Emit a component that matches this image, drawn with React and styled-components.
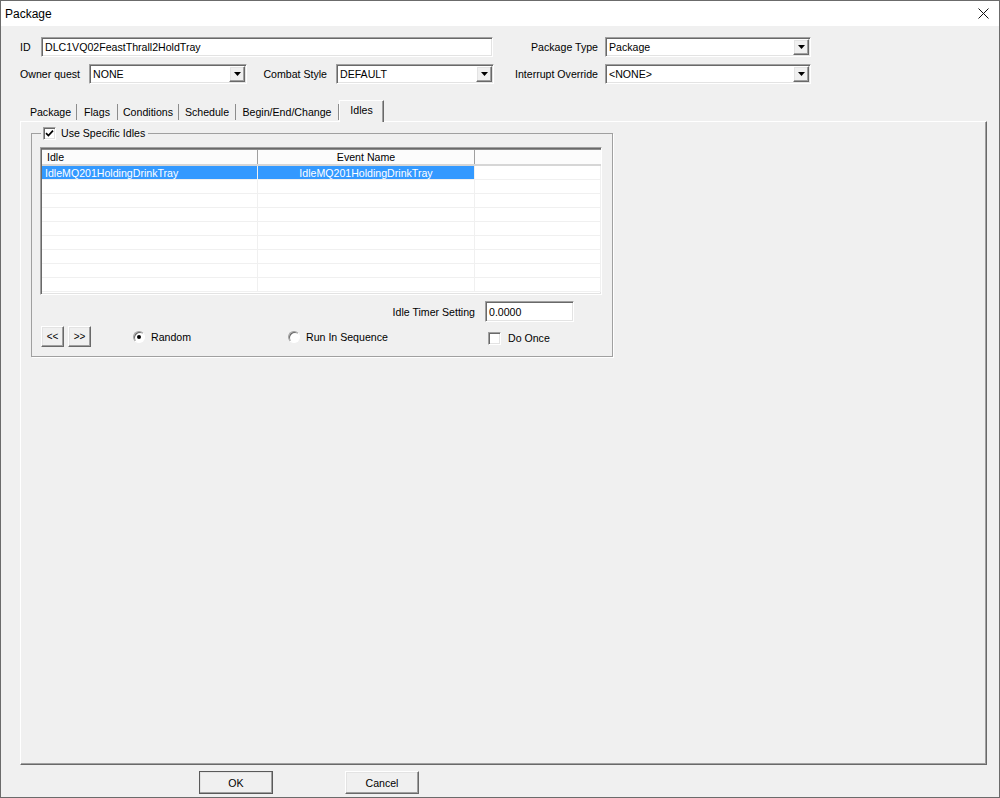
import React from 'react';
import styled, { createGlobalStyle, css } from 'styled-components';

const GlobalStyle = createGlobalStyle`
  html, body {
    margin: 0;
    padding: 0;
    background: #f0f0f0;
  }
  body {
    font-family: "Liberation Sans", Arial, sans-serif;
    font-size: 10.6px;
    color: #000;
  }
  * {
    box-sizing: border-box;
  }
`;

const raised = css`
  border: 1px solid;
  border-color: #fff #696969 #696969 #fff;
  box-shadow: inset -1px -1px 0 #a0a0a0, inset 1px 1px 0 #e3e3e3;
  background: #f0f0f0;
`;

const sunken = css`
  border: 1px solid;
  border-color: #a0a0a0 #fff #fff #a0a0a0;
  box-shadow: inset 1px 1px 0 #696969, inset -1px -1px 0 #e3e3e3;
  background: #fff;
`;

const Window = styled.div`
  width: 1000px;
  height: 798px;
  border: 1px solid #6b6b6b;
  background: #f0f0f0;
  display: flex;
  flex-direction: column;
`;

const TitleBar = styled.div`
  height: 25px;
  flex-shrink: 0;
  background: #fff;
  display: flex;
  align-items: center;
  justify-content: space-between;
  padding: 0 10px 0 4px;
  font-size: 12px;
`;

const Body = styled.div`
  flex: 1;
  display: flex;
  flex-direction: column;
  padding: 11px 12px 3px 19px;
`;

const FieldRow = styled.div`
  display: flex;
  align-items: center;
  height: 20px;
  flex-shrink: 0;
  margin-top: ${p => p.$gap || 0}px;
`;

const FieldLabel = styled.span`
  width: ${p => p.$w}px;
  flex-shrink: 0;
  white-space: nowrap;
  text-align: ${p => (p.$right ? 'right' : 'left')};
  padding-right: ${p => p.$pad || 0}px;
`;

const TextBox = styled.div`
  ${sunken};
  width: ${p => p.$w}px;
  height: ${p => p.$h || 20}px;
  flex-shrink: 0;
  display: flex;
  align-items: center;
  padding-left: 3px;
  white-space: nowrap;
  overflow: hidden;
`;

const ComboBox = styled(TextBox)`
  justify-content: space-between;
  padding: 0 1px 0 3px;
`;

const DropButton = styled.span`
  ${raised};
  width: 16px;
  height: 16px;
  display: flex;
  align-items: center;
  justify-content: center;
`;

const TabStrip = styled.div`
  display: flex;
  align-items: flex-end;
  height: 21px;
  margin-top: 16px;
  padding-left: 5px;
  flex-shrink: 0;
  position: relative;
  z-index: 1;
`;

const Tab = styled.div`
  width: ${p => p.$w}px;
  height: ${p => (p.$active ? 22 : 16)}px;
  display: flex;
  align-items: center;
  justify-content: center;
  white-space: nowrap;
  ${p =>
    p.$active
      ? css`
          margin-bottom: -1px;
          padding-bottom: 4px;
          background: #f0f0f0;
          border-left: 1px solid #fff;
          border-top: 1px solid #fff;
          border-right: 1px solid #696969;
          box-shadow: inset -1px 0 0 #a0a0a0;
        `
      : css`
          margin-bottom: 1px;
          border-right: 1px solid #8c8c8c;
        `}
`;

const TabPanel = styled.div`
  flex: 1;
  border: 1px solid;
  border-color: #fff #696969 #696969 #fff;
  box-shadow: inset -1px -1px 0 #a0a0a0;
  padding: 5px 0 0 10px;
`;

const GroupBox = styled.fieldset`
  width: 582px;
  height: 230px;
  margin: 0;
  padding: 0;
  border: 1px solid #a0a0a0;
  box-shadow: 1px 1px 0 #fff;
`;

const GroupLegend = styled.legend`
  display: flex;
  align-items: center;
  gap: 5px;
  margin-left: 9px;
  padding: 0 3px 0 2px;
  height: 13px;
  line-height: 13px;
`;

const CheckBox = styled.span`
  ${sunken};
  width: 13px;
  height: 13px;
  flex-shrink: 0;
  display: inline-flex;
  align-items: center;
  justify-content: center;
`;

const ListView = styled.div`
  ${sunken};
  margin: 7px 0 0 8px;
  width: 562px;
  height: 148px;
  padding: 1px 0 0 1px;
  overflow: hidden;
`;

const ListHeader = styled.div`
  display: flex;
  height: 17px;
  background: #fcfcfc;
  border-top: 1px solid #8c8c8c;
  border-bottom: 2px solid #d6d6d6;
`;

const HeaderCell = styled.div`
  width: ${p => (p.$w ? `${p.$w}px` : 'auto')};
  flex: ${p => (p.$w ? '0 0 auto' : 1)};
  display: flex;
  align-items: center;
  justify-content: ${p => (p.$center ? 'center' : 'flex-start')};
  padding-left: ${p => (p.$center ? 0 : 5)}px;
  border-right: 1px solid ${p => (p.$last ? 'transparent' : '#a0a0a0')};
`;

const ListRow = styled.div`
  display: flex;
  height: 14px;
`;

const ListCell = styled.div`
  width: ${p => (p.$w ? `${p.$w}px` : 'auto')};
  flex: ${p => (p.$w ? '0 0 auto' : 1)};
  display: flex;
  align-items: center;
  justify-content: ${p => (p.$center ? 'center' : 'flex-start')};
  padding-left: ${p => (p.$center ? 0 : 3)}px;
  border-right: 1px solid #f0f0f0;
  border-bottom: 1px solid #f0f0f0;
  white-space: nowrap;
  background: ${p => (p.$selected ? '#3399ff' : '#fff')};
  color: ${p => (p.$selected ? '#fff' : '#000')};
`;

const TimerRow = styled.div`
  display: flex;
  align-items: center;
  justify-content: flex-end;
  gap: 10px;
  margin-top: 6px;
  padding-right: 38px;
  height: 21px;
`;

const OptionRow = styled.div`
  display: grid;
  grid-template-columns: 92px 155px 200px auto;
  align-items: center;
  margin: 4px 0 0 9px;
  height: 21px;
`;

const ArrowGroup = styled.div`
  display: flex;
  gap: 4px;
`;

const ArrowButton = styled.button`
  ${raised};
  width: 23px;
  height: 21px;
  padding: 0;
  font-family: inherit;
  font-size: 10px;
  color: #000;
`;

const Option = styled.label`
  display: flex;
  align-items: center;
  gap: ${p => p.$gap || 6}px;
  margin-top: ${p => p.$drop || 0}px;
`;

const Radio = styled.span`
  width: 12px;
  height: 12px;
  border-radius: 50%;
  background: #fff;
  border: 1px solid;
  border-color: #a0a0a0 #fff #fff #a0a0a0;
  box-shadow: inset 1px 1px 0 #696969;
  display: inline-flex;
  align-items: center;
  justify-content: center;
  &::after {
    content: '';
    width: 4px;
    height: 4px;
    border-radius: 50%;
    background: ${p => (p.$on ? '#000' : 'transparent')};
  }
`;

const Footer = styled.div`
  display: flex;
  gap: 72px;
  margin: 6px 0 0 179px;
  height: 23px;
  flex-shrink: 0;
`;

const DialogButton = styled.button`
  ${raised};
  width: 74px;
  height: 23px;
  padding: 0;
  font-family: inherit;
  font-size: 10.6px;
  color: #000;
  ${p =>
    p.$default &&
    css`
      border-color: #fff #404040 #404040 #fff;
      outline: 1px solid #5a5a5a;
      outline-offset: -1px;
    `}
`;

const CloseIcon = () => (
  <svg width="11" height="11" viewBox="0 0 11 11">
    <path d="M0.5 0.5 L10.5 10.5 M10.5 0.5 L0.5 10.5" stroke="#111" strokeWidth="1" />
  </svg>
);

const DropArrow = () => (
  <svg width="7" height="4" viewBox="0 0 7 4">
    <path d="M0 0 H7 L3.5 4 Z" fill="#000" />
  </svg>
);

const CheckMark = () => (
  <svg width="9" height="9" viewBox="0 0 9 9">
    <path d="M1 4.2 L3.4 6.6 L8 1.6" fill="none" stroke="#000" strokeWidth="1.7" />
  </svg>
);

function Combo({ w, value }) {
  return (
    <ComboBox $w={w}>
      <span>{value}</span>
      <DropButton>
        <DropArrow />
      </DropButton>
    </ComboBox>
  );
}

const tabs = [
  { name: 'Package', w: 52 },
  { name: 'Flags', w: 41 },
  { name: 'Conditions', w: 61 },
  { name: 'Schedule', w: 57 },
  { name: 'Begin/End/Change', w: 103 },
  { name: 'Idles', w: 45, active: true },
];

const columns = [216, 217];

const idles = [{ idle: 'IdleMQ201HoldingDrinkTray', event: 'IdleMQ201HoldingDrinkTray' }];

const ROWS = 9;

function IdleList() {
  const rows = Array.from({ length: ROWS }, (_, i) => idles[i] || null);
  return (
    <ListView>
      <ListHeader>
        <HeaderCell $w={columns[0]}>{'Idle'}</HeaderCell>
        <HeaderCell $w={columns[1]} $center>{'Event Name'}</HeaderCell>
        <HeaderCell $last />
      </ListHeader>
      {rows.map((r, idx) => (
        <ListRow key={idx}>
          <ListCell $w={columns[0]} $selected={idx === 0}>{r ? r.idle : ''}</ListCell>
          <ListCell $w={columns[1]} $center $selected={idx === 0}>{r ? r.event : ''}</ListCell>
          <ListCell />
        </ListRow>
      ))}
    </ListView>
  );
}

function App() {
  return (
    <>
      <GlobalStyle />
      <Window>
        <TitleBar>
          <span>{'Package'}</span>
          <CloseIcon />
        </TitleBar>
        <Body>
          <FieldRow>
            <FieldLabel $w={21}>{'ID'}</FieldLabel>
            <TextBox $w={452}>{'DLC1VQ02FeastThrall2HoldTray'}</TextBox>
            <FieldLabel $w={112} $right $pad={7}>{'Package Type'}</FieldLabel>
            <Combo w={206} value={'Package'} />
          </FieldRow>
          <FieldRow $gap={7}>
            <FieldLabel $w={69}>{'Owner quest'}</FieldLabel>
            <Combo w={158} value={'NONE'} />
            <FieldLabel $w={89} $right $pad={9}>{'Combat Style'}</FieldLabel>
            <Combo w={158} value={'DEFAULT'} />
            <FieldLabel $w={111} $right $pad={7}>{'Interrupt Override'}</FieldLabel>
            <Combo w={206} value={'<NONE>'} />
          </FieldRow>

          <TabStrip>
            {tabs.map(t => (
              <Tab key={t.name} $w={t.w} $active={t.active}>
                {t.name}
              </Tab>
            ))}
          </TabStrip>

          <TabPanel>
            <GroupBox>
              <GroupLegend>
                <CheckBox>
                  <CheckMark />
                </CheckBox>
                {'Use Specific Idles'}
              </GroupLegend>
              <IdleList />
              <TimerRow>
                <span>{'Idle Timer Setting'}</span>
                <TextBox $w={89} $h={21}>{'0.0000'}</TextBox>
              </TimerRow>
              <OptionRow>
                <ArrowGroup>
                  <ArrowButton>{'<<'}</ArrowButton>
                  <ArrowButton>{'>>'}</ArrowButton>
                </ArrowGroup>
                <Option>
                  <Radio $on />
                  {'Random'}
                </Option>
                <Option>
                  <Radio />
                  {'Run In Sequence'}
                </Option>
                <Option $gap={7} $drop={3}>
                  <CheckBox />
                  {'Do Once'}
                </Option>
              </OptionRow>
            </GroupBox>
          </TabPanel>

          <Footer>
            <DialogButton $default>{'OK'}</DialogButton>
            <DialogButton>{'Cancel'}</DialogButton>
          </Footer>
        </Body>
      </Window>
    </>
  );
}

export default App;
